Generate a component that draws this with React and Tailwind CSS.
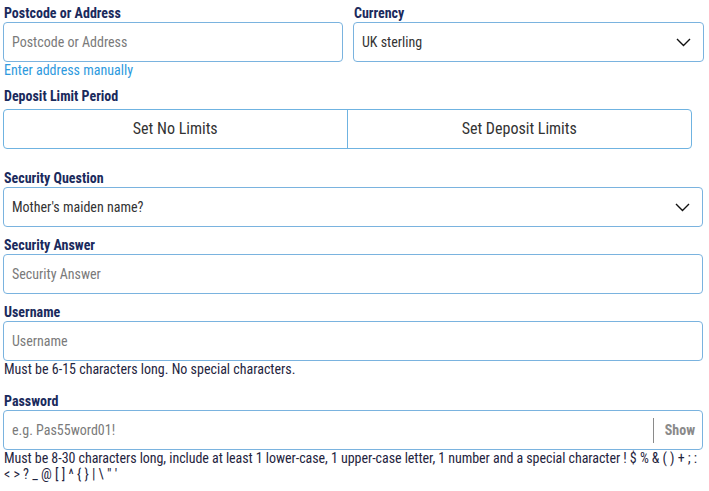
const font = "font-['Roboto_Condensed','Roboto',sans-serif]";

const passwordRules1 = "Must be 8-30 characters long, include at least 1 lower-case, 1 upper-case letter, 1 number and a special character ! $ % & ( ) + ; :";
const passwordRules2 = "< > ? _ @ [ ] ^ { } | \\ \" '";

const Label = ({ children, className = '' }) => (
    <div className={`pl-[1px] text-[14px] leading-[18px] font-bold text-[#1a2a5c] ${className}`}>
        {children}
    </div>
);

const Chevron = () => (
    <svg width="15" height="9" viewBox="0 0 15 9" className="shrink-0">
        <polyline points="1,1 7.5,7.5 14,1" fill="none" stroke="#111" strokeWidth="1.4" />
    </svg>
);

const TextInput = ({ placeholder }) => (
    <div className="h-[40px] rounded-[4px] border border-[#7ab3df] bg-white flex items-center pl-[8px]">
        <span className="text-[14px] text-[#7a7a7a]">{placeholder}</span>
    </div>
);

const SelectBox = ({ value }) => (
    <div className="h-[40px] rounded-[4px] border border-[#7ab3df] bg-white flex items-center justify-between pl-[8px] pr-[12px]">
        <span className="text-[14px] text-[#333]">{value}</span>
        <Chevron />
    </div>
);

const Helper = ({ children, className = '' }) => (
    <p className={`pl-[1px] text-[14px] leading-[16px] text-[#1f2540] ${className}`}>{children}</p>
);

export default function App() {
    return (
        <div className={`${font} w-[709px] min-h-[491px] bg-white pt-[4px] pl-[3px] pr-[6px]`}>
            <div className="grid grid-cols-[340px_351px] gap-[10px]">
                <div>
                    <Label>Postcode or Address</Label>
                    <TextInput placeholder="Postcode or Address" />
                    <a className="block pl-[1px] text-[14px] leading-[16px] text-[#2e9ade]">Enter address manually</a>
                </div>
                <div>
                    <Label>Currency</Label>
                    <SelectBox value="UK sterling" />
                </div>
            </div>

            <Label className="mt-[9px] mb-[4px]">Deposit Limit Period</Label>
            <div className="w-[689px] grid grid-cols-2 h-[40px] rounded-[4px] border border-[#6fb3e1] overflow-hidden">
                <button className="flex items-center justify-center text-[16px] text-[#333] border-r border-[#6fb3e1]">
                    Set No Limits
                </button>
                <button className="flex items-center justify-center text-[16px] text-[#333]">
                    Set Deposit Limits
                </button>
            </div>

            <div className="mt-[20px]">
                <Label>Security Question</Label>
                <SelectBox value="Mother's maiden name?" />
            </div>

            <div className="mt-[9px]">
                <Label>Security Answer</Label>
                <TextInput placeholder="Security Answer" />
            </div>

            <div className="mt-[9px]">
                <Label>Username</Label>
                <TextInput placeholder="Username" />
                <Helper>Must be 6-15 characters long. No special characters.</Helper>
            </div>

            <div className="mt-[15px]">
                <Label>Password</Label>
                <div className="h-[40px] rounded-[4px] border border-[#7ab3df] bg-white flex items-center pl-[8px]">
                    <span className="flex-1 text-[14px] text-[#7a7a7a]">e.g. Pas55word01!</span>
                    <div className="h-[25px] w-px bg-[#8a8a8a]" />
                    <span className="pl-[11px] pr-[7px] text-[14px] font-bold text-[#8a8a8a]">Show</span>
                </div>
                <Helper className="whitespace-nowrap tracking-[-0.05px]">{passwordRules1}</Helper>
                <Helper>{passwordRules2}</Helper>
            </div>
        </div>
    );
}
